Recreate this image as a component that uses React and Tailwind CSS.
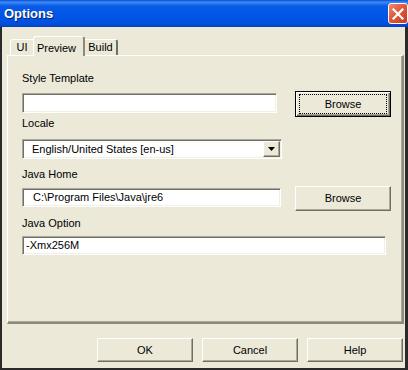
import React from 'react';

const sunken =
  "border border-t-[#aca899] border-l-[#aca899] border-r-white border-b-white shadow-[inset_1px_1px_0_#716f64,inset_-1px_-1px_0_#f1efe2] bg-white";
const raised =
  "border border-t-white border-l-white border-r-[#716f64] border-b-[#716f64] shadow-[inset_-1px_-1px_0_#aca899] bg-[#ece9d8]";

const Label = ({ children, className = "" }) => (
  <div className={"h-[14px] leading-[14px] " + className}>{children}</div>
);

const Button = ({ children, className = "" }) => (
  <div className={"w-[96px] flex items-center justify-center " + raised + " " + className}>
    {children}
  </div>
);

const App = () => {
  return (
    <div className="w-[408px] h-[370px] flex flex-col bg-[#ece9d8] font-['Liberation_Sans',Arial,sans-serif] text-[11px] text-black overflow-hidden select-none">
      {/* title bar */}
      <div className="h-[27px] shrink-0 flex items-center pl-[4px] bg-[linear-gradient(to_bottom,#0b4fd6_0%,#3d8af5_8%,#0a5ce8_22%,#0055e5_60%,#0050df_88%,#0a3fb8_100%)]">
        <span className="text-white font-bold text-[13px] leading-none [text-shadow:1px_1px_0_#0a246a]">
          Options
        </span>
        <div className="ml-auto w-[20px] h-[21px] rounded-[3px] border border-white bg-[linear-gradient(135deg,#f08a6c_0%,#e2583b_45%,#c93b1e_100%)] flex items-center justify-center">
          <svg width="12" height="12" viewBox="0 0 12 12">
            <path d="M1.5 1.5 L10.5 10.5 M10.5 1.5 L1.5 10.5" stroke="white" strokeWidth="2.2" strokeLinecap="square" />
          </svg>
        </div>
      </div>

      {/* body */}
      <div className="flex-1 flex flex-col border-l-[2px] border-r-[3px] border-b-[2px] border-l-[#2a2a2a] border-r-[#2a2a2a] border-b-[#2a2a2a] pl-[5px] pr-[1px]">
        {/* tabs */}
        <div className="mt-[9px] h-[19px] pl-[3px] flex items-end">
          <div className="w-[23px] h-[16px] border-l border-t border-white rounded-tl-[3px] flex items-center justify-center">
            UI
          </div>
          <div className="relative z-10 w-[52px] h-[20px] -mb-[1px] bg-[#ece9d8] border-l border-t border-white border-r-2 border-r-[#8d8a7d] rounded-t-[3px] flex items-start justify-center pt-[3px] pr-[4px]">
            Preview
          </div>
          <div className="w-[33px] h-[16px] border-t border-white border-r-2 border-r-[#716f64] rounded-tr-[3px] flex items-center justify-center">
            Build
          </div>
        </div>

        {/* panel */}
        <div className="h-[269px] border-t border-l border-white border-r-2 border-b-2 border-r-[#8d8a7d] border-b-[#8d8a7d] shadow-[inset_-1px_-1px_0_#aca899] pl-[14px] flex flex-col">
          <Label className="mt-[15px]">Style Template</Label>
          <div className="mt-[8px] h-[20px] flex items-start">
            <div className={"w-[255px] h-[20px] " + sunken}></div>
            <div className="relative ml-[18px] -mt-[2px] w-[96px] h-[26px] flex items-center justify-center border border-black bg-[#ece9d8] shadow-[inset_1px_1px_0_#fff,inset_-1px_-1px_0_#716f64,inset_-2px_-2px_0_#aca899]">
              Browse
              <span className="absolute left-[3px] right-[3px] top-[2px] bottom-[2px] border border-dotted border-black"></span>
            </div>
          </div>

          <Label className="mt-[3px]">Locale</Label>
          <div className={"mt-[9px] w-[260px] h-[20px] flex items-center " + sunken}>
            <span className="pl-[9px] flex-1">English/United States [en-us]</span>
            <div className={"w-[17px] h-[16px] mr-[1px] flex items-center justify-center " + raised}>
              <svg width="7" height="4" viewBox="0 0 7 4">
                <path d="M0 0 H7 L3.5 4 Z" fill="black" />
              </svg>
            </div>
          </div>

          <Label className="mt-[8px]">Java Home</Label>
          <div className="mt-[7px] h-[19px] flex items-start">
            <div className={"w-[259px] h-[19px] flex items-center pl-[10px] " + sunken}>
              C:\Program Files\Java\jre6
            </div>
            <Button className="ml-[14px] -mt-[2px] h-[25px]">Browse</Button>
          </div>

          <Label className="mt-[9px]">Java Option</Label>
          <div className={"mt-[6px] w-[364px] h-[19px] flex items-center pl-[3px] " + sunken}>
            -Xmx256M
          </div>
        </div>

        {/* buttons */}
        <div className="mt-[14px] pr-[1px] flex justify-end gap-[9px]">
          <Button className="h-[24px]">OK</Button>
          <Button className="h-[24px]">Cancel</Button>
          <Button className="h-[24px]">Help</Button>
        </div>
      </div>
    </div>
  );
};

export default App;
